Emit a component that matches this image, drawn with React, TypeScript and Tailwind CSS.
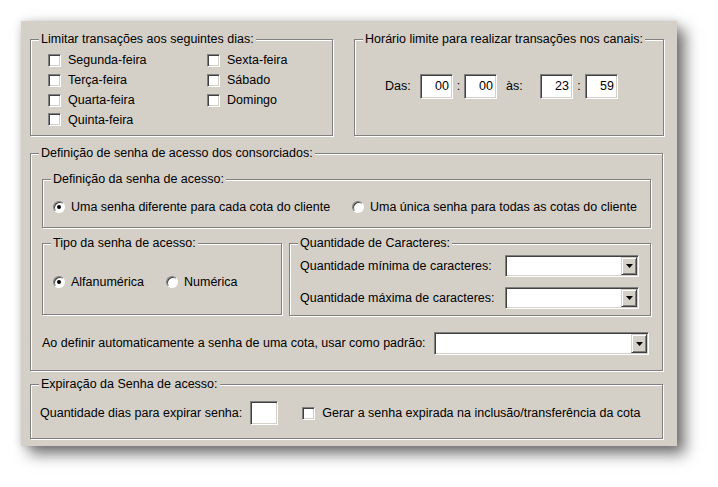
import type { ReactNode } from "react";

// Janela estilo Windows clássico: parâmetros de senha dos consorciados.

const FONT = { fontFamily: '"Liberation Sans", Arial, sans-serif' };

function GroupBox({
  title,
  className = "",
  children,
}: {
  title: string;
  className?: string;
  children?: ReactNode;
}) {
  return (
    <div
      className={`relative border border-[#808080] shadow-[inset_1px_1px_0_#fff,1px_1px_0_#fff] ${className}`}
    >
      <span className="absolute left-[8px] top-[-8px] bg-[#d4d0c8] px-[2px] leading-[14px] whitespace-nowrap">
        {title}
      </span>
      {children}
    </div>
  );
}

function Check({ label, className = "" }: { label: string; className?: string }) {
  return (
    <label className={`flex items-center gap-[7px] whitespace-nowrap ${className}`}>
      <span className="block h-[13px] w-[13px] shrink-0 border border-t-[#808080] border-l-[#808080] border-b-white border-r-white bg-white shadow-[inset_1px_1px_0_#404040,inset_-1px_-1px_0_#d4d0c8]" />
      {label}
    </label>
  );
}

function Radio({ label, checked }: { label: string; checked?: boolean }) {
  return (
    <label className="flex items-center gap-[6px] whitespace-nowrap">
      <span className="flex h-[12px] w-[12px] shrink-0 items-center justify-center rounded-full border border-t-[#808080] border-l-[#808080] border-b-white border-r-white bg-white shadow-[inset_1px_1px_0_#404040]">
        {checked && <span className="block h-[4px] w-[4px] rounded-full bg-black" />}
      </span>
      {label}
    </label>
  );
}

function Edit({ value, className = "" }: { value?: string; className?: string }) {
  return (
    <div
      className={`flex items-center justify-end border border-t-[#808080] border-l-[#808080] border-b-white border-r-white bg-white pr-[3px] shadow-[inset_1px_1px_0_#404040,inset_-1px_-1px_0_#d4d0c8] ${className}`}
    >
      {value}
    </div>
  );
}

function Combo({ className = "" }: { className?: string }) {
  return (
    <div
      className={`flex justify-end border border-t-[#808080] border-l-[#808080] border-b-white border-r-white bg-white p-[1px] shadow-[inset_1px_1px_0_#404040,inset_-1px_-1px_0_#d4d0c8] ${className}`}
    >
      <div className="flex w-[16px] items-center justify-center border border-t-[#d4d0c8] border-l-[#d4d0c8] border-b-[#404040] border-r-[#404040] bg-[#d4d0c8] shadow-[inset_1px_1px_0_#fff,inset_-1px_-1px_0_#808080]">
        <svg width="7" height="4" viewBox="0 0 7 4">
          <path d="M0 0h7L3.5 4z" fill="#000" />
        </svg>
      </div>
    </div>
  );
}

export default function App() {
  return (
    <div className="min-h-screen bg-white pl-[21px] pt-[21px] text-[12.5px] text-black" style={FONT}>
      <div className="h-[425px] w-[656px] bg-[#d4d0c8] pl-[9px] pt-[18px] shadow-[8px_8px_14px_rgba(0,0,0,0.55),0_0_8px_rgba(0,0,0,0.15)]">
        <div className="flex gap-[21px]">
          <GroupBox title="Limitar transações aos seguintes dias:" className="h-[97px] w-[303px]">
            <div className="grid grid-cols-[159px_auto] grid-rows-[repeat(4,19.7px)] grid-flow-col pl-[17px] pt-[11px]">
              <Check label="Segunda-feira" />
              <Check label="Terça-feira" />
              <Check label="Quarta-feira" />
              <Check label="Quinta-feira" />
              <Check label="Sexta-feira" />
              <Check label="Sábado" />
              <Check label="Domingo" />
            </div>
          </GroupBox>
          <GroupBox title="Horário limite para realizar transações nos canais:" className="h-[97px] w-[310px]">
            <div className="flex items-center pl-[30px] pt-[34px]">
              <span className="w-[35px]">Das:</span>
              <Edit value="00" className="h-[25px] w-[33px]" />
              <span className="w-[11px] text-center">:</span>
              <Edit value="00" className="h-[25px] w-[33px]" />
              <span className="w-[43px] pl-[9px]">às:</span>
              <Edit value="23" className="h-[25px] w-[33px]" />
              <span className="w-[12px] text-center">:</span>
              <Edit value="59" className="h-[25px] w-[33px]" />
            </div>
          </GroupBox>
        </div>

        <GroupBox title="Definição de senha de acesso dos consorciados:" className="mt-[17px] h-[218px] w-[633px]">
          <div className="pl-[11px] pt-[25px]">
            <GroupBox title="Definição da senha de acesso:" className="h-[49px] w-[609px]">
              <div className="flex pl-[10px] pt-[18px]">
                <div className="w-[299px]">
                  <Radio label="Uma senha diferente para cada cota do cliente" checked />
                </div>
                <Radio label="Uma única senha para todas as cotas do cliente" />
              </div>
            </GroupBox>

            <div className="mt-[15px] flex gap-[7px]">
              <GroupBox title="Tipo da senha de acesso:" className="h-[72px] w-[240px]">
                <div className="flex pl-[10px] pt-[29px]">
                  <div className="w-[113px]">
                    <Radio label="Alfanumérica" checked />
                  </div>
                  <Radio label="Numérica" />
                </div>
              </GroupBox>
              <GroupBox title="Quantidade de Caracteres:" className="h-[73px] w-[362px]">
                <div className="flex flex-col gap-[10px] pl-[10px] pr-[11px] pt-[11px]">
                  <div className="flex items-center">
                    <span className="flex-1">Quantidade mínima de caracteres:</span>
                    <Combo className="h-[22px] w-[134px]" />
                  </div>
                  <div className="flex items-center">
                    <span className="flex-1">Quantidade máxima de caracteres:</span>
                    <Combo className="h-[22px] w-[134px]" />
                  </div>
                </div>
              </GroupBox>
            </div>

            <div className="mt-[16px] flex items-center pr-[13px]">
              <span className="flex-1">Ao definir automaticamente a senha de uma cota, usar como padrão:</span>
              <Combo className="h-[23px] w-[215px]" />
            </div>
          </div>
        </GroupBox>

        <GroupBox title="Expiração da Senha de acesso:" className="mt-[13px] h-[55px] w-[633px]">
          <div className="flex items-center pl-[9px] pt-[16px]">
            <span>Quantidade dias para expirar senha:</span>
            <Edit className="ml-[8px] h-[24px] w-[28px]" />
            <Check label="Gerar a senha expirada na inclusão/transferência da cota" className="ml-[24px]" />
          </div>
        </GroupBox>
      </div>
    </div>
  );
}
